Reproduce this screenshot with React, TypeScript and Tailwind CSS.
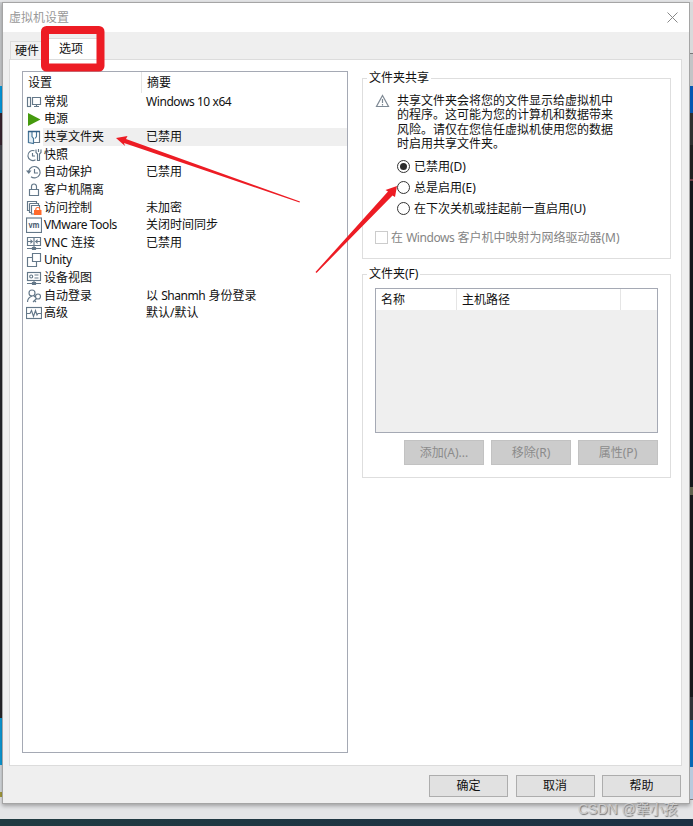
import React, { useState } from "react";

const ICON = "#647889";

type SettingRow = {
  id: string;
  label: string;
  summary?: string;
  icon: React.ReactNode;
};

const settings: SettingRow[] = [
  {
    id: "general",
    label: "常规",
    summary: "Windows 10 x64",
    icon: (
      <>
        <rect x="1.5" y="3.5" width="3" height="9" />
        <path d="M6.5 3.5h8v7h-8zM10.5 10.500v2M8 12.500h5" />
      </>
    ),
  },
  {
    id: "power",
    label: "电源",
    icon: <path d="M2 2 14.500 8.500 2 15z" fill="#459a0e" stroke="none" />,
  },
  {
    id: "shared",
    label: "共享文件夹",
    summary: "已禁用",
    icon: (
      <>
        <path d="M2.500 2.500h11v11h-11z" fill="#fff" />
        <path d="M2.500 2.500H6v5l1.500 2v5l-5-1z" fill="#e6f0f7" stroke="#48779a" />
        <path d="M13.500 2.500h-3v5L9 9.500" stroke="#48779a" />
        <path d="M2 2.500h12" stroke="#315f85" strokeWidth="1.500" />
      </>
    ),
  },
  {
    id: "snapshot",
    label: "快照",
    icon: (
      <>
        <path d="M8.500 3.800a5 5 0 1 0 1 9M6.500 6v3h2.500" />
        <path d="M10 2.500v3l1.500 1.500v6.500h2V7L15 5.500v-3M12.500 2v3" fill="#fff" />
      </>
    ),
  },
  {
    id: "autoprotect",
    label: "自动保护",
    summary: "已禁用",
    icon: (
      <>
        <path d="M2.800 7A5.700 5.700 0 1 1 5 12.800M8.500 5v4H12" />
        <path d="M0 6.500h5.500L2.800 10z" fill={ICON} stroke="none" />
      </>
    ),
  },
  {
    id: "isolation",
    label: "客户机隔离",
    icon: (
      <>
        <path d="M3.500 7.500h9v6h-9z" />
        <path d="M5.500 7.500V4.500a2.500 2.500 0 0 1 5 0v3" />
      </>
    ),
  },
  {
    id: "access",
    label: "访问控制",
    summary: "未加密",
    icon: (
      <>
        <path d="M10.500 3v-1.500h-9v9h2M3.500 3.500h9v2M3.500 3.500v9h2M13.500 8V5.500h-8v8.500h2.500" />
        <path d="M9.800 11V9.500a2 2 0 0 1 4 0V11" stroke="#ff6a2b" />
        <rect x="8" y="10" width="7.500" height="5" fill="#ff6a2b" stroke="none" />
      </>
    ),
  },
  {
    id: "tools",
    label: "VMware Tools",
    summary: "关闭时间同步",
    icon: (
      <>
        <rect x="0.500" y="1" width="15" height="14.500" />
        <text x="8" y="10.500" textAnchor="middle" fontSize="8" fontWeight="700" fill="#4c6071" stroke="none" textLength="11" lengthAdjust="spacingAndGlyphs">vm</text>
      </>
    ),
  },
  {
    id: "vnc",
    label: "VNC 连接",
    summary: "已禁用",
    icon: (
      <>
        <path d="M1.500 2.500h13v8h-13zM8 2.500v8M2 6.500h4.500M14 6.500H9.500M8 10.500v3M1 13.500h14" />
        <path d="M4.500 4 7 6.500 4.500 9zM11.500 4 9 6.500 11.500 9z" fill={ICON} stroke="none" />
        <path d="M6.500 12.500h3v2h-3z" />
      </>
    ),
  },
  {
    id: "unity",
    label: "Unity",
    icon: <path d="M6.500 1.500h8v8h-8zM6.500 5.500h-5v9h9v-5" />,
  },
  {
    id: "device",
    label: "设备视图",
    icon: (
      <>
        <rect x="1.500" y="2.500" width="13" height="8" />
        <circle cx="5.200" cy="6.500" r="1.500" />
        <path d="M8.500 5h4M8.500 8h4M8 10.500v3M1 13.500h14M6.500 12.500h3v2h-3z" />
      </>
    ),
  },
  {
    id: "login",
    label: "自动登录",
    summary: "以 Shanmh 身份登录",
    icon: (
      <>
        <circle cx="6" cy="5" r="3" />
        <path d="M1.500 14c0-3.500 2-5 4.500-6M8 8l1 1" />
        <circle cx="12" cy="8.500" r="2.500" />
        <path d="M10.500 10.500 7 14M8.500 12.500l1.500 1.500" />
      </>
    ),
  },
  {
    id: "advanced",
    label: "高级",
    summary: "默认/默认",
    icon: (
      <>
        <rect x="0.500" y="2.500" width="15" height="11" />
        <path d="M1 8.500h3l1.500-3 2 6 2-6 1.500 4.500 1-1.500h3" />
      </>
    ),
  },
];

const modes = [
  { id: "off", label: "已禁用(D)" },
  { id: "on", label: "总是启用(E)" },
  { id: "until", label: "在下次关机或挂起前一直启用(U)" },
];

export default function App() {
  const [selected, setSelected] = useState("shared");
  const [mode, setMode] = useState("off");

  return (
    <div className="relative h-[826px] w-[693px] overflow-hidden bg-[#e4e5e7] font-['Noto_Sans','Noto_Sans_CJK_SC',sans-serif] text-[12px] leading-[18px] text-[#111]">
      <div className="flex h-[819px] pt-[2px]">
        <LeftEdge />

        {/* Dialog window */}
        <div className="flex h-[802px] w-[688px] shrink-0 flex-col border border-[#a5a5a5] bg-[#efefef] shadow-[0_2px_4px_rgba(0,0,0,0.3)]">
          <header className="flex h-[29px] shrink-0 items-center justify-between bg-white pl-[6px] pr-[11px] text-[#999]">
            <span>虚拟机设置</span>
            <svg className="h-[11px] w-[11px]" viewBox="0 0 11 11" fill="none" stroke="#888">
              <path d="M.5.500l10 10M10.500.500l-10 10" />
            </svg>
          </header>

          <nav className="flex h-[27px] shrink-0 items-end pl-[7px]">
            <button className="h-[18px] w-[38px] border border-b-0 border-[#dcdcdc] bg-[#f2f2f2] pl-[4px] text-left leading-[18px]">硬件</button>
            <button className="h-[21px] w-[50px] border border-b-0 border-[#dcdcdc] bg-white pl-[10px] text-left leading-[20px]">选项</button>
          </nav>

          <main className="mx-[6px] flex h-[707px] w-[673px] shrink-0 border border-[#dcdcdc] bg-white pl-[12px] pt-[11px]">
            {/* Settings list */}
            <section className="flex h-[682px] w-[326px] shrink-0 flex-col border border-[#a5a9b4]">
              <div className="flex h-[21px] shrink-0 items-center">
                <div className="h-full w-[119px] border-r border-[#e5e5e5] pl-[5px] leading-[22px]">设置</div>
                <div className="pl-[5px] leading-[22px]">摘要</div>
              </div>
              {settings.map((row) => (
                <div
                  key={row.id}
                  onClick={() => setSelected(row.id)}
                  className="flex h-[17.63px] shrink-0 items-center whitespace-nowrap pl-[3px]"
                >
                  <svg className="h-4 w-4 shrink-0" viewBox="0 0 16 16" fill="none" stroke={ICON} strokeWidth="1.15">
                    {row.icon}
                  </svg>
                  <div className={`ml-px flex h-full flex-1 items-center ${selected === row.id ? "bg-[#efefef]" : ""}`}>
                    <span className="w-[103px] pl-px"><Latin text={row.label} /></span>
                    <span><Latin text={row.summary ?? ""} /></span>
                  </div>
                </div>
              ))}
            </section>

            <div className="ml-[14px] flex w-[309px] flex-col">
              {/* Folder sharing */}
              <fieldset className="mt-[-3px] h-[191px] border border-[#dedede] pl-[12px]">
                <legend className="-ml-[8px] h-[20px] px-[2px] leading-[20px]">文件夹共享</legend>
                <div className="flex pt-[6px]">
                  <svg className="h-[14px] w-[15px]" viewBox="0 0 15 14" fill="none" stroke="#7e8994" strokeWidth="1.200">
                    <path d="M7.500 1.500 13.500 12.500h-12zM7.500 5v4M7.500 10v1.500" />
                  </svg>
                  <p className="ml-[7px] w-[222px] whitespace-nowrap leading-[14.400px]">
                    共享文件夹会将您的文件显示给虚拟机中<br />
                    的程序。这可能为您的计算机和数据带来<br />
                    风险。请仅在您信任虚拟机使用您的数据<br />
                    时启用共享文件夹。
                  </p>
                </div>
                <div className="mt-[6px] flex flex-col gap-[3px] pl-[22px]">
                  {modes.map((m) => (
                    <label key={m.id} className="flex h-[18px] items-center gap-[4px]">
                      <input type="radio" name="mode" className="peer sr-only" checked={mode === m.id} onChange={() => setMode(m.id)} />
                      <span className="flex h-[13px] w-[13px] items-center justify-center rounded-full border border-[#333] bg-white">
                        {mode === m.id && <span className="h-[7px] w-[7px] rounded-full bg-[#2b2b2b]" />}
                      </span>
                      {m.label}
                    </label>
                  ))}
                </div>
                <div className="mt-[11px] flex h-[18px] items-center text-[#858585]">
                  <span className="mr-[3px] h-[13px] w-[13px] border border-[#cccccc]" />
                  <span><Latin text="在 Windows 客户机中映射为网络驱动器(M)" /></span>
                </div>
              </fieldset>

              {/* Folder list */}
              <fieldset className="mt-[5px] h-[214px] border border-[#dedede] pl-[12px]">
                <legend className="-ml-[8px] h-[20px] px-[2px] leading-[20px]">文件夹(F)</legend>
                <div className="mt-[4px] h-[145px] w-[283px] border border-[#a5a9b4] bg-[#efefef]">
                  <div className="flex h-[21px] bg-white leading-[21px]">
                    <span className="w-[81px] border-r border-[#e5e5e5] pl-[5px]">名称</span>
                    <span className="w-[164px] border-r border-[#e5e5e5] pl-[5px]">主机路径</span>
                  </div>
                </div>
                <div className="mt-[7px] flex w-[283px] justify-end gap-[7px] text-[#8b8b8b]">
                  {["添加(A)...", "移除(R)", "属性(P)"].map((t) => (
                    <button key={t} disabled className="h-[25px] w-[80px] border border-[#c2c2c2] bg-[#cccccc]">{t}</button>
                  ))}
                </div>
              </fieldset>
            </div>
          </main>

          <footer className="flex justify-end gap-[7.500px] pr-[8px] pt-[9px]">
            {["确定", "取消", "帮助"].map((t) => (
              <button key={t} className="h-[22px] w-[79px] border border-[#adadad] bg-[#e1e1e1] leading-[20px]">{t}</button>
            ))}
          </footer>
        </div>

        <RightEdge />
      </div>
      <div className="h-[7px] bg-gradient-to-r from-[#203b42] to-[#1d3043]" />

      <Annotations />
      <span className="absolute left-[578px] top-[799px] whitespace-nowrap font-['Liberation_Sans','Noto_Sans_CJK_SC',sans-serif] text-[14px] leading-[20px] text-[#c9c9c9] [text-shadow:1px_1px_1px_#777]">
        CSDN @犟小孩
      </span>
    </div>
  );
}

// Latin words sit a little tighter than the surrounding Chinese text
function Latin({ text }: { text: string }) {
  return (
    <>
      {text.split(/([A-Za-z0-9][A-Za-z0-9 ]{2,}[A-Za-z0-9])/).map((part, i) =>
        i % 2 ? <span key={i} className="tracking-[-0.43px]">{part}</span> : part
      )}
    </>
  );
}

// Slivers of the windows behind the dialog
function LeftEdge() {
  return (
    <div className="flex w-[2px] shrink-0 flex-col overflow-hidden">
      <div className="h-[84px] bg-[#c9cbcd]" />
      <div className="h-[27px] bg-[#049be0]" />
      <div className="h-[32px] bg-[#38252f]" />
      <div className="h-[25px] bg-[#46464e]" />
      <div className="h-[548px] bg-[#262629]" />
      <div className="h-[47px] bg-[#0b9bd8]" />
      <div className="h-[27px] bg-[#d7dbdf]" />
      <div className="h-[5px] bg-[#a59d3d]" />
    </div>
  );
}

function RightEdge() {
  return (
    <div className="flex w-[3px] shrink-0 flex-col">
      <div className="h-[51px] bg-[#d9dadb]" />
      <div className="h-px bg-[#777]" />
      <div className="h-[32px] bg-[#c3c4c6]" />
      <div className="h-[27px] bg-[#0557b2]" />
      <div className="h-[32px] bg-[#303030]" />
      <div className="h-[34px] bg-[#202020]" />
      <div className="h-[2px] bg-[#704048]" />
      <div className="h-[306px] bg-[#15171b]" />
      <div className="h-[8px] bg-[#62634e]" />
      <div className="h-[202px] bg-[#19191b]" />
      <div className="h-[23px] bg-[#333438]" />
      <div className="h-[47px] bg-[#0667b5]" />
      <div className="h-[32px] bg-[#b8cadd]" />
      <div className="h-px bg-[#777]" />
    </div>
  );
}

function Annotations() {
  return (
    <svg className="pointer-events-none absolute left-0 top-0 h-[826px] w-[693px]" viewBox="0 0 693 826">
      <rect x="45" y="30" width="55.500" height="37.500" rx="1.500" fill="none" stroke="#ed1c24" strokeWidth="8" strokeLinejoin="round" />
      <g fill="#ed1c24">
        <path d="M116 138 127.500 136 126 139 300 201.500 299.500 202.500 124 143 125 146z" />
        <path d="M397 186 395 197 392.500 195.500 316.500 273 315.500 272 388 191.500 385.500 190z" />
      </g>
    </svg>
  );
}
